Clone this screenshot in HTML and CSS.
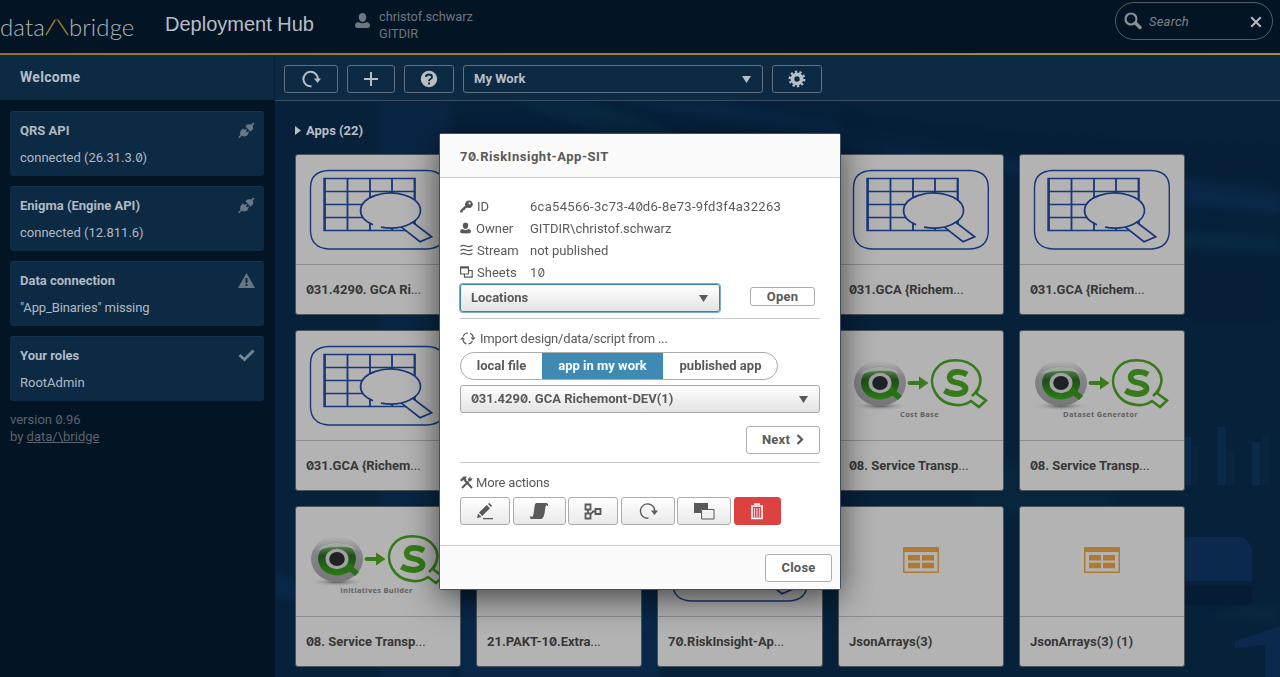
FILE: index.html
```html
<!DOCTYPE html>
<html lang="en">
<head>
<meta charset="utf-8">
<title>Deployment Hub</title>
<link rel="stylesheet" href="styles.css">
</head>
<body>
<svg width="0" height="0" class="defs">
  <defs>
    <linearGradient id="silver" x1="0" y1="0" x2="0" y2="1"><stop offset="0" stop-color="#b5b5b5"/><stop offset=".35" stop-color="#858589"/><stop offset="1" stop-color="#77777b"/></linearGradient>
    <linearGradient id="qgreen" x1="0" y1="0" x2="0" y2="1"><stop offset="0" stop-color="#75936f"/><stop offset=".4" stop-color="#1d4e16"/><stop offset="1" stop-color="#2c7c17"/></linearGradient>
    <radialGradient id="ground"><stop offset="0" stop-color="#555"/><stop offset="1" stop-color="#b3b3b3" stop-opacity="0"/></radialGradient>
    <symbol id="gca" viewBox="0 0 138 82">
      <g fill="none" stroke="#17377a" stroke-width="1.4">
        <path d="M18 1.500H118Q136 2 136.300 18V62Q136 79 118 80H20Q2 79 1.500 62V18Q2 2 20 1.500Z"/>
        <path d="M15 9.500H106V61.500H15ZM15 22.500H106M15 35.500H106M15 48.500H106"/>
        <path d="M16 9V62M38.500 9V62M61 9V62M83 9V62M105.500 9V62" stroke-width="1.800"/>
      </g>
      <ellipse cx="81.500" cy="41.500" rx="30" ry="17.500" fill="#b3b3b3"/>
      <path d="M92.700 58.300L111 72.700L122.700 67.700L104.300 53.700Z" fill="#b3b3b3"/>
      <path d="M64 55.700A30 17.500 0 1 1 72 58.100M92.700 58.300L111 72.700L122.700 67.700L104.300 53.700" fill="none" stroke="#17377a" stroke-width="1.700"/>
    </symbol>
    <symbol id="qlik" viewBox="0 0 138 52">
      <ellipse cx="28" cy="47" rx="28" ry="4.500" fill="url(#ground)"/>
      <ellipse cx="28" cy="24" rx="26" ry="23" fill="url(#silver)"/>
      <ellipse cx="28" cy="24" rx="19" ry="16.500" fill="url(#qgreen)"/>
      <path d="M33 31L46 41L50 37L40 28Z" fill="#287117"/>
      <ellipse cx="28" cy="24" rx="11.500" ry="10.200" fill="#a2a2a2"/>
      <ellipse cx="28" cy="24" rx="7.800" ry="7" fill="#202124"/>
      <path d="M9 15Q27 1 47 14Q29 9 9 15Z" fill="#c7c7c7" opacity=".6"/>
      <path d="M57 22H67V17.500L76.500 24L67 30.500V26H57Q54 24 57 22Z" fill="#3b7b1a"/>
      <path d="M120 37C129 29 131 19 125 11C115-2 92-1.500 84 10C74 24 84 44.500 104 46C109 46.500 114 45.500 119 42L127 48L134 41.500L125 35Q124 33 127 29" fill="none" stroke="#377a1b" stroke-width="2.600"/>
      <path d="M115 15.500Q110 12.500 104 13C95 14 96 22 104 23.500C117 25.500 116 34.500 105 35Q98 35 92.500 31.500" fill="none" stroke="#377a1b" stroke-width="5.800"/>
    </symbol>
    <symbol id="table" viewBox="0 0 36 26"><path fill="#ad7a34" fill-rule="evenodd" d="M1 0H35Q36 0 36 1V25Q36 26 35 26H1Q0 26 0 25V1Q0 0 1 0ZM1.500 5V24.500H34.500V5Z"/><path fill="#ad7a34" d="M5 8H17V13.500H5ZM19 8H31V13.500H19ZM5 15.800H17V21.300H5ZM19 15.800H31V21.300H19Z"/></symbol>
    <symbol id="plug" viewBox="0 0 17 17"><path d="M15.300.5L16.500 1.700L14.600 3.700Q16.200 7 13.500 8.800L12.400 9.500L7.400 4.500Q9 1.100 13.200 2.600ZM5 6.500L6.700 8L8 6.800L9 7.800L7.900 9.200L9 10.300L10.300 9.200L11.200 10L9.800 11.400L10.500 12.200Q7 15.700 3.600 13.800L1.400 16.200L.3 15.100L2.300 12.900Q1.200 9.300 5 6.500Z"/></symbol>
    <symbol id="user" viewBox="0 0 16 17"><path d="M8 .5C10.500.5 12 2.200 12 5S10.500 10 8 10S4 7.800 4 5S5.500.5 8 .5ZM3.500 10Q8 13 12.500 10Q16 10.500 16 14Q16 16.500 12 16.500H4Q0 16.500 0 14Q0 10.500 3.500 10Z"/></symbol>
    <symbol id="reload" viewBox="0 0 20 18"><path d="M9.500 16.200A7.200 7.200 0 1 1 15.800 9" fill="none" stroke="currentColor" stroke-width="var(--sw,2)"/><path d="M12 8.500H19L15.500 13Z"/></symbol>
  </defs>
</svg>

<header class="top">
  <div class="logo"><span>data</span><svg width="24" height="17" viewBox="0 0 24 17"><path d="M1 16L10 1M13 1L23 16" fill="none" stroke="#957620" stroke-width="1.500"/><path d="M9.500 1H13.500" stroke="#6b5a25"/></svg><span>bridge</span></div>
  <h1>Deployment Hub</h1>
  <div class="account"><svg width="15" height="17"><use href="#user"/></svg><p>christof.schwarz<br>GITDIR</p></div>
  <div class="search">
    <svg width="18" height="18" viewBox="0 0 18 18"><circle cx="7" cy="7" r="5.500" fill="none" stroke="#8b9095" stroke-width="2.200"/><path d="M11.500 11L16 15.500" stroke="#8b9095" stroke-width="3.400" stroke-linecap="round"/></svg>
    <em>Search</em>
    <svg width="12" height="12" viewBox="0 0 12 12"><path d="M1.200 1.200L10.800 10.800M10.800 1.200L1.200 10.800" stroke="#b5b8bb" stroke-width="2"/></svg>
  </div>
</header>

<div class="layout">
  <aside class="side">
    <h2>Welcome</h2>
    <div class="panels">
      <section><h3>QRS API</h3><svg width="17" height="17"><use href="#plug"/></svg><p>connected (26.31.3.<i class="z">0</i>)</p></section>
      <section><h3>Enigma (Engine API)</h3><svg width="17" height="17"><use href="#plug"/></svg><p>connected (12.811.6)</p></section>
      <section><h3>Data connection</h3><svg width="17" height="17" viewBox="0 0 17 17"><path fill-rule="evenodd" d="M8.500 1L17 16H0ZM7.500 6V11H9.500V6ZM7.500 12V14H9.500V12Z"/></svg><p class="tight">"App_Binaries" missing</p></section>
      <section><h3>Your roles</h3><svg width="17" height="17" viewBox="0 0 17 17"><path d="M1.500 8L6.500 12.500L15.500 3.500" fill="none" stroke="#75838f" stroke-width="3"/></svg><p>RootAdmin</p></section>
      <p class="version">version <i class="z">0</i>.96<br>by <u>data/\bridge</u></p>
    </div>
  </aside>

  <main class="main">
    <div class="bar">
      <span class="b w54 turn"><svg width="20" height="18"><use href="#reload"/></svg></span>
      <span class="b w48"><svg width="16" height="16" viewBox="0 0 16 16"><path d="M8 1V15M1 8H15" stroke="#b9bec3" stroke-width="2"/></svg></span>
      <span class="b w50"><svg width="18" height="18" viewBox="0 0 18 18"><circle cx="9" cy="9" r="8.200"/><path d="M6 7Q6 4.500 9 4.500T12 7Q12 8.300 10.500 9T9 11.200M9 12.500V14.500" fill="none" stroke="#0d2a45" stroke-width="1.900"/></svg></span>
      <span class="b pick">My Work<svg width="9" height="7" viewBox="0 0 9 7"><path d="M0 0H9L4.500 7Z"/></svg></span>
      <span class="b w50"><svg width="18" height="18" viewBox="0 0 18 18"><circle cx="9" cy="9" r="4.600" fill="none" stroke="#b9bec3" stroke-width="3.800"/><circle cx="9" cy="9" r="7.300" fill="none" stroke="#b9bec3" stroke-width="2.200" stroke-dasharray="2.290 2.290"/></svg></span>
    </div>
    <div class="stage">
      <svg class="backdrop" width="1005" height="577" viewBox="275 100 1005 577">
        <g class="soft">
          <path fill="#0a2848" d="M380 100H450V677H380ZM610 100H710L1280 192V212L1000 170Z"/>
          <path fill="#082c44" d="M510 100H590L700 140H620ZM1185 230L1280 237V251L1185 247Z"/>
          <path fill="#0a2b4f" d="M1185 190L1280 200V212L1185 203ZM275 570L295 580V600L275 595ZM460 600L660 560V677H460Z"/>
          <path fill="#051b32" d="M840 110Q1000 140 1280 145V180Q1000 160 840 140ZM1185 255H1280V320H1185Z" opacity=".6"/>
          <path fill="#07273e" d="M970 460H1115V515H970ZM1200 615L1250 603H1280V625Z"/>
        </g>
        <path fill="#0a294d" d="M1185 536H1243Q1252 542 1252 552V580H1185ZM1235 640L1280 625V677H1265V644L1235 647Z"/>
        <path fill="#092b49" d="M1185 436H1191V484H1185ZM1218 426H1226V484H1218ZM1252 441H1260V484H1252Z"/>
        <path fill="#08253d" d="M1192 445H1198V484H1192ZM1228 449H1235V484H1228ZM1262 434H1269V484H1262Z"/>
        <path fill="#051b32" d="M1185 585H1252V604H1185Z" opacity=".7"/>
      </svg>
      <h2 class="group"><svg width="6" height="9" viewBox="0 0 6 9"><path d="M0 0L6 4.500L0 9Z"/></svg>Apps (22)</h2>
      <div class="tiles">
        <article><div class="pic"><svg width="138" height="82"><use href="#gca"/></svg></div><h4><i class="z">0</i>31.429<i class="z">0</i>. GCA Ri<small>...</small></h4></article>
        <article><div class="pic"></div><h4></h4></article>
        <article><div class="pic"></div><h4></h4></article>
        <article><div class="pic"><svg width="138" height="82"><use href="#gca"/></svg></div><h4><i class="z">0</i>31.GCA {Richem<small>...</small></h4></article>
        <article><div class="pic"><svg width="138" height="82"><use href="#gca"/></svg></div><h4><i class="z">0</i>31.GCA {Richem<small>...</small></h4></article>
        <article><div class="pic"><svg width="138" height="82"><use href="#gca"/></svg></div><h4><i class="z">0</i>31.GCA {Richem<small>...</small></h4></article>
        <article><div class="pic"></div><h4></h4></article>
        <article><div class="pic"></div><h4></h4></article>
        <article><div class="pic q"><svg width="138" height="52"><use href="#qlik"/></svg><b>Cost Base</b></div><h4><i class="z">0</i>8. Service Transp<small>...</small></h4></article>
        <article><div class="pic q"><svg width="138" height="52"><use href="#qlik"/></svg><b>Dataset Generator</b></div><h4><i class="z">0</i>8. Service Transp<small>...</small></h4></article>
        <article><div class="pic q"><svg width="138" height="52"><use href="#qlik"/></svg><b>Initiatives Builder</b></div><h4><i class="z">0</i>8. Service Transp<small>...</small></h4></article>
        <article><div class="pic"></div><h4>21.PAKT-1<i class="z">0</i>.Extra<small>...</small></h4></article>
        <article><div class="pic"><svg width="138" height="82"><use href="#gca"/></svg></div><h4>7<i class="z">0</i>.RiskInsight-Ap<small>...</small></h4></article>
        <article><div class="pic t"><svg width="36" height="26"><use href="#table"/></svg></div><h4>JsonArrays(3)</h4></article>
        <article><div class="pic t"><svg width="36" height="26"><use href="#table"/></svg></div><h4>JsonArrays(3) (1)</h4></article>
      </div>
    </div>
  </main>
</div>

<div class="modal">
  <h2>7<i class="z">0</i>.RiskInsight-App-SIT</h2>
  <div class="body">
    <dl>
      <dt><svg width="13" height="13" viewBox="0 0 13 13"><path fill-rule="evenodd" d="M8.700.6A3.700 3.700 0 1 1 7.300 7.500L6 8.500L5 8.700L4.700 10L3.300 10.300L2.500 12.300L.3 12.700L.2 10.500L5.200 5.500A3.700 3.700 0 0 1 8.700.6ZM9.500 2.200A1.100 1.100 0 1 0 9.600 4.400A1.100 1.100 0 0 0 9.500 2.200Z"/></svg><span class="gap5">ID</span></dt><dd class="hash">6ca54566-3c73-4<i class="z">0</i>d6-8e73-9fd3f4a32263</dd>
      <dt><svg width="11" height="12" viewBox="0 0 16 17"><use href="#user" width="16" height="17"/></svg><span class="own">Owner</span></dt><dd>GITDIR\christof.schwarz</dd>
      <dt><svg width="13" height="12" viewBox="0 0 13 12"><path d="M.5 2.500Q3 .5 6 2T12.500 1.500M.5 6.500Q3 4.500 6 6T12.500 5.500M.5 10.500Q3 8.500 6 10T12.500 9.500" fill="none" stroke="#595959" stroke-width="1.300"/></svg><span class="gap5">Stream</span></dt><dd>not published</dd>
      <dt><svg width="13" height="12" viewBox="0 0 13 12"><path d="M.6 1H8.500V8H.6ZM8.500 4.500H12.200V11.200H4.500V8" fill="none" stroke="#595959" stroke-width="1.200"/><path d="M.5.5H8.500V2.500H.5Z"/></svg><span class="gap5">Sheets</span></dt><dd class="hash">1<i class="z">0</i></dd>
    </dl>
    <div class="row first"><span class="select focus">Locations<svg width="9" height="7" viewBox="0 0 9 7"><path d="M0 0H9L4.500 7Z"/></svg></span><span class="btn open">Open</span></div>
    <p class="label"><svg width="16" height="13" viewBox="0 0 16 13"><path d="M3 7.500A5.200 5.200 0 0 0 6.500 12M3.200 4.500A5.400 5.400 0 0 1 8 1M10 1.300A5.200 5.200 0 0 1 13.200 5.500M12.500 9A5.200 5.200 0 0 1 8.500 12" fill="none" stroke="#595959" stroke-width="1.200"/><path d="M0 7.500L2.500 5L5 7.500ZM10.500 5.500H15.800L13 8.200Z"/></svg><span>Import design/data/script from ...</span></p>
    <div class="tabs"><span>local file</span><span class="on">app in my work</span><span>published app</span></div>
    <span class="select full"><span><i class="z">0</i>31.429<i class="z">0</i>. GCA Richemont-DEV(1)</span><svg width="9" height="7" viewBox="0 0 9 7"><path d="M0 0H9L4.500 7Z"/></svg></span>
    <div class="row next"><span class="btn">Next<svg width="8" height="11" viewBox="0 0 8 11"><path d="M1.500 1L6 5.500L1.500 10" fill="none" stroke="#595959" stroke-width="2.200"/></svg></span></div>
    <p class="label more"><svg width="13" height="13" viewBox="0 0 13 13"><path d="M2 12L8.500 5.500M5 4.500L12 12" stroke="#595959" stroke-width="2"/><path d="M0 4L3.500.5H7L5.500 2.500L6.500 4L5 5.500L3.500 4L1.500 5.500ZM8 3L10.500.3L10.300 2.500L12.700 2.300L11 5L8.500 5.800Z"/></svg><span>More actions</span></p>
    <div class="actions">
      <span class="a50"><svg width="18" height="18" viewBox="0 0 18 18"><path d="M1 16L2 11.500L5.500 15ZM3 10.500L10.800 3L14 6.200L6.200 14ZM12 2L13.200 1L16 3.500L15 5ZM7 16H17V17.200H7Z"/></svg></span>
      <span class="a53"><svg width="20" height="18" viewBox="0 0 20 18"><path d="M7 1H18Q19.500 2 19 4H18L17.500 2.500Q16.500 4 16 8Q15.500 15 12.500 17H2Q.5 16 1 14.500H4Q5 10 5.500 5Q5.500 2 7 1Z"/></svg></span>
      <span class="a50"><svg width="18" height="17" viewBox="0 0 18 17"><path d="M1.500 1.500H6.500V6.500H1.500ZM1.500 10.500H6.500V15.500H1.500ZM11.500 6H16.500V11H11.500ZM4 6V11M7 11L9 8.500H11.500" fill="none" stroke="#595959" stroke-width="1.800"/></svg></span>
      <span class="a54 thin turn"><svg width="20" height="18"><use href="#reload"/></svg></span>
      <span class="a54"><svg width="21" height="17" viewBox="0 0 21 17"><path d="M0 0H14V6H7V10H0Z"/><path d="M7.600 6.500H20V16H7.600Z" fill="none" stroke="#595959"/></svg></span>
      <span class="a47 del"><svg width="14" height="17" viewBox="0 0 14 17"><path d="M1 3H13M5 2V1H9V2M2 4V15.500H12V4" fill="none" stroke="#fff" stroke-width="1.600"/><path d="M4.500 5V15M7 5V15M9.500 5V15" stroke="#f3c4e0" stroke-width="1.200"/></svg></span>
    </div>
  </div>
  <footer><span class="btn">Close</span></footer>
</div>
</body>
</html>
```

FILE: styles.css
```css
* { box-sizing: border-box; }
body { margin: 0; height: 677px; overflow: hidden; background: #031425; font: 13px/17px Roboto, "Noto Sans", sans-serif; color: #595959; }
h1, h2, h3, h4, p, dl, dd { margin: 0; font-size: 13px; }
svg { display: block; flex: none; fill: currentColor; }
.defs { position: absolute; }
.z { font-family: Inter, sans-serif; font-style: normal; font-size: .93em; letter-spacing: -.3px; font-feature-settings: "zero"; }

.top { height: 55px; display: flex; align-items: flex-start; background: #031425; border-bottom: 2px solid #a07629; border-image: linear-gradient(90deg, #99702a, #a78b43) 1; }
.logo { width: 165px; display: flex; align-items: flex-start; padding-top: 14px; font: 300 24px/26px Lato, sans-serif; color: #b1b5b8; letter-spacing: .1px; }
.logo svg { margin: 5px 0 0; }
.top h1 { width: 190px; padding-top: 11px; font: 20px/27px "Liberation Sans", sans-serif; color: #b9bdc1; }
.account { flex: 1; display: flex; gap: 9px; padding-top: 8px; color: #6e777f; }
.account svg { margin-top: 4px; }
.account p { font-size: 12.800px; letter-spacing: -.05px; }
.search { width: 158px; height: 38px; margin: 2px 7px 0 0; border: 1px solid #535d66; border-radius: 19px; display: flex; align-items: center; padding: 0 10px 0 8px; }
.search em { flex: 1; margin-left: 7px; color: #7b8289; letter-spacing: .2px; }
.search svg:last-child { margin-top: 2px; }

.layout { display: flex; height: 622px; }
.side { width: 275px; }
.side > h2 { height: 45px; padding: 14px 20px; background: #0d2a45; border-right: 1px solid #08213a; color: #b8bdc2; font-size: 14px; letter-spacing: .3px; }
.panels { padding: 11px 11px 0 10px; display: grid; gap: 10px; }
.panels section { height: 65px; display: grid; grid-template-columns: 1fr 17px; row-gap: 10px; align-content: start; padding: 10px 9px 0 10px; background: #0d2a45; border-top: 1px solid #133552; border-radius: 3px; color: #b1b9c1; }
.panels section svg { color: #687785; }
.tight { letter-spacing: -.12px; }
.version { color: #5b646d; }

.main { width: 1005px; display: flex; flex-direction: column; }
.bar { height: 46px; display: flex; padding: 10px 9px; gap: 9px; background: #0d2a45; border-bottom: 1px solid #3a4e60; color: #b9bec3; }
.b { height: 28px; border: 1px solid #61707f; border-radius: 3px; display: flex; align-items: center; justify-content: center; font-weight: 700; }
.w54 { width: 54px; } .w48 { width: 48px; } .w50 { width: 50px; }
.turn { padding-left: 2px; }
.b.pick { width: 300px; justify-content: space-between; padding: 0 11px 1px 10px; }
.b.pick svg { margin-top: 2px; }
.stage { position: relative; flex: 1; background: #07213b; overflow: hidden; }
.backdrop { position: absolute; left: 0; top: 0; }
.soft { filter: blur(3px); opacity: .7; }
.group { position: relative; display: flex; align-items: center; gap: 5px; padding: 21px 0 15px 20px; color: #b9bec3; }
.tiles { position: relative; display: grid; grid-template-columns: repeat(5, 166px); grid-auto-rows: 161px; gap: 15px; padding-left: 20px; }
article { background: #b3b3b3; border: 1px solid #4b5359; border-radius: 3px; }
.pic { height: 110px; border-bottom: 1px solid #8b8b8b; display: flex; flex-direction: column; align-items: center; padding-top: 14px; }
.pic.q { padding-top: 28px; }
.pic b { margin: -2px 3px 0 0; font: 700 7.500px/10px "Open Sans", sans-serif; color: #5f5f5f; letter-spacing: .3px; }
.pic.t { padding-top: 40px; }
article h4 { padding: 16px 10px; white-space: nowrap; color: #373737; letter-spacing: 0; }
article small { font-size: 13px; font-weight: 400; }

.modal { position: fixed; left: 440px; top: 134px; width: 400px; height: 455px; background: #fff; border-radius: 2px; box-shadow: 0 0 0 1px #3f5060, 0 8px 35px rgba(0,0,0,.65); }
.modal > h2 { height: 44px; padding: 14px 20px; background: #fbfbfb; border-bottom: 1px solid #ccc; letter-spacing: .52px; }
.body { height: 367px; padding: 17px 20px 0; }
dl { display: grid; grid-template-columns: 70px 1fr; grid-auto-rows: 22px; align-items: center; }
dt { display: flex; align-items: center; }
.gap5 { margin-left: 4px; } .own { margin-left: 5px; }
.hash { letter-spacing: .3px; }
.row { display: flex; align-items: center; justify-content: space-between; }
.row.first { height: 36px; padding: 0 5px 6px 0; border-bottom: 1px solid #c7c7c7; }
.select { width: 260px; height: 28px; display: flex; align-items: center; justify-content: space-between; padding: 0 11px 0 10px; border: 1px solid #a8a8a8; border-radius: 3px; background: linear-gradient(#fff, #e3e3e3); font-weight: 700; }
.select svg { margin-top: 1px; }
.focus { border-color: #3d82a8; box-shadow: 0 0 0 1px #77adcb; }
.full { width: 360px; margin-top: 5px; padding-bottom: 1px; }
.btn { height: 28px; display: inline-flex; align-items: center; justify-content: center; gap: 6px; padding-bottom: 1px; border: 1px solid #acacac; border-radius: 3px; background: #fff; font-weight: 700; letter-spacing: .2px; }
.open { width: 65px; height: 19px; margin-top: -3px; padding: 0; }
.label { height: 33px; display: flex; align-items: center; gap: 4px; padding-top: 5px; letter-spacing: -.18px; }
.tabs { display: flex; width: 318px; height: 28px; border: 1px solid #acacac; border-radius: 14px; overflow: hidden; font-weight: 700; line-height: 26px; text-align: center; }
.tabs span { flex: 0 0 115px; }
.tabs span:first-child { flex-basis: 81px; }
.tabs .on { flex-basis: 121px; margin: -1px 0; line-height: 28px; background: #3f8ab3; color: #fff; }
.next { height: 50px; justify-content: flex-end; padding-top: 4px; border-bottom: 1px solid #c7c7c7; }
.next .btn { width: 74px; }
.more { height: 34px; gap: 3px; }
.actions { display: flex; width: 321px; justify-content: space-between; }
.actions > span { height: 28px; display: flex; align-items: center; justify-content: center; border: 1px solid #acacac; border-radius: 3px; background: linear-gradient(#fff, #e9e9e9); }
.actions .a50 { width: 50px; } .actions .a53 { width: 53px; } .actions .a54 { width: 54px; } .actions .a47 { width: 47px; }
.thin { --sw: 1.300; }
.actions .del { background: #dc423f; border-color: #dc423f; }
.modal footer { height: 44px; display: flex; justify-content: flex-end; padding: 8px 8px 0; background: #fbfbfb; border-top: 1px solid #ccc; }
footer .btn { width: 67px; }
```
